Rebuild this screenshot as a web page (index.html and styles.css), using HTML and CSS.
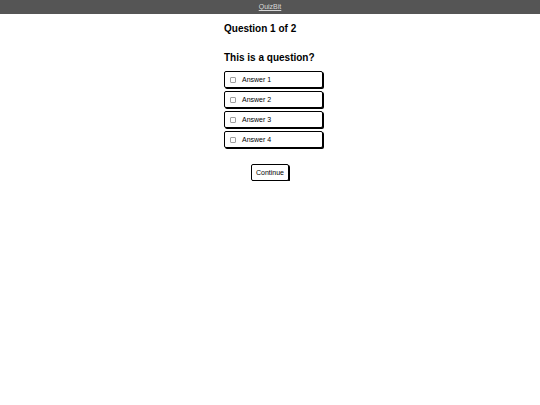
FILE: index.html
```html
<!DOCTYPE html>
<html lang="en">
<head>
<meta charset="utf-8">
<title>QuizBit</title>
<link rel="stylesheet" href="styles.css">
</head>
<body>
<header class="topbar"><a href="#" class="brand">QuizBit</a></header>
<main class="quiz">
  <h1 class="q-count">Question 1 of 2</h1>
  <h2 class="q-text">This is a question?</h2>
  <div class="answers">
    <div class="answer"><span class="box"></span><span>Answer 1</span></div>
    <div class="answer"><span class="box"></span><span>Answer 2</span></div>
    <div class="answer"><span class="box"></span><span>Answer 3</span></div>
    <div class="answer"><span class="box"></span><span>Answer 4</span></div>
  </div>
</main>
<div class="actions"><button class="continue">Continue</button></div>
</body>
</html>
```
FILE: styles.css
```css
html, body {
  margin: 0;
  padding: 0;
  background: #fff;
  font-family: "Liberation Sans", Arial, sans-serif;
  color: #000;
}
.topbar {
  height: 14px;
  background: #555555;
  display: flex;
  align-items: center;
  justify-content: center;
}
.brand {
  color: #d8d8d8;
  font-size: 7px;
  line-height: 14px;
  text-decoration: underline;
}
.quiz {
  width: 100px;
  margin: 0 auto;
  padding-left: 8px;
}
.q-count {
  margin: 9px 0 0;
  font-size: 10px;
  line-height: 12px;
  font-weight: bold;
}
.q-text {
  margin: 17px 0 0;
  font-size: 10px;
  line-height: 12px;
  font-weight: bold;
}
.answers {
  margin-top: 7px;
  display: flex;
  flex-direction: column;
  gap: 3px;
}
.answer {
  box-sizing: border-box;
  width: 99px;
  height: 17px;
  border: 1px solid #000;
  border-radius: 2px;
  box-shadow: 1px 1px 0 #000;
  display: flex;
  align-items: center;
  padding-left: 5px;
  gap: 6px;
  font-size: 7px;
  background: #fff;
}
.box {
  box-sizing: border-box;
  width: 6px;
  height: 6px;
  border: 1px solid #a0a0a0;
  border-radius: 1px;
}
.actions {
  display: flex;
  justify-content: center;
  margin-top: 16px;
}
.continue {
  box-sizing: border-box;
  height: 17px;
  padding: 0 3.5px;
  border: 1px solid #000;
  border-radius: 2px;
  box-shadow: 1px 1px 0 #000;
  background: #fff;
  font-family: "Liberation Sans", Arial, sans-serif;
  font-size: 7px;
  color: #000;
}
```
